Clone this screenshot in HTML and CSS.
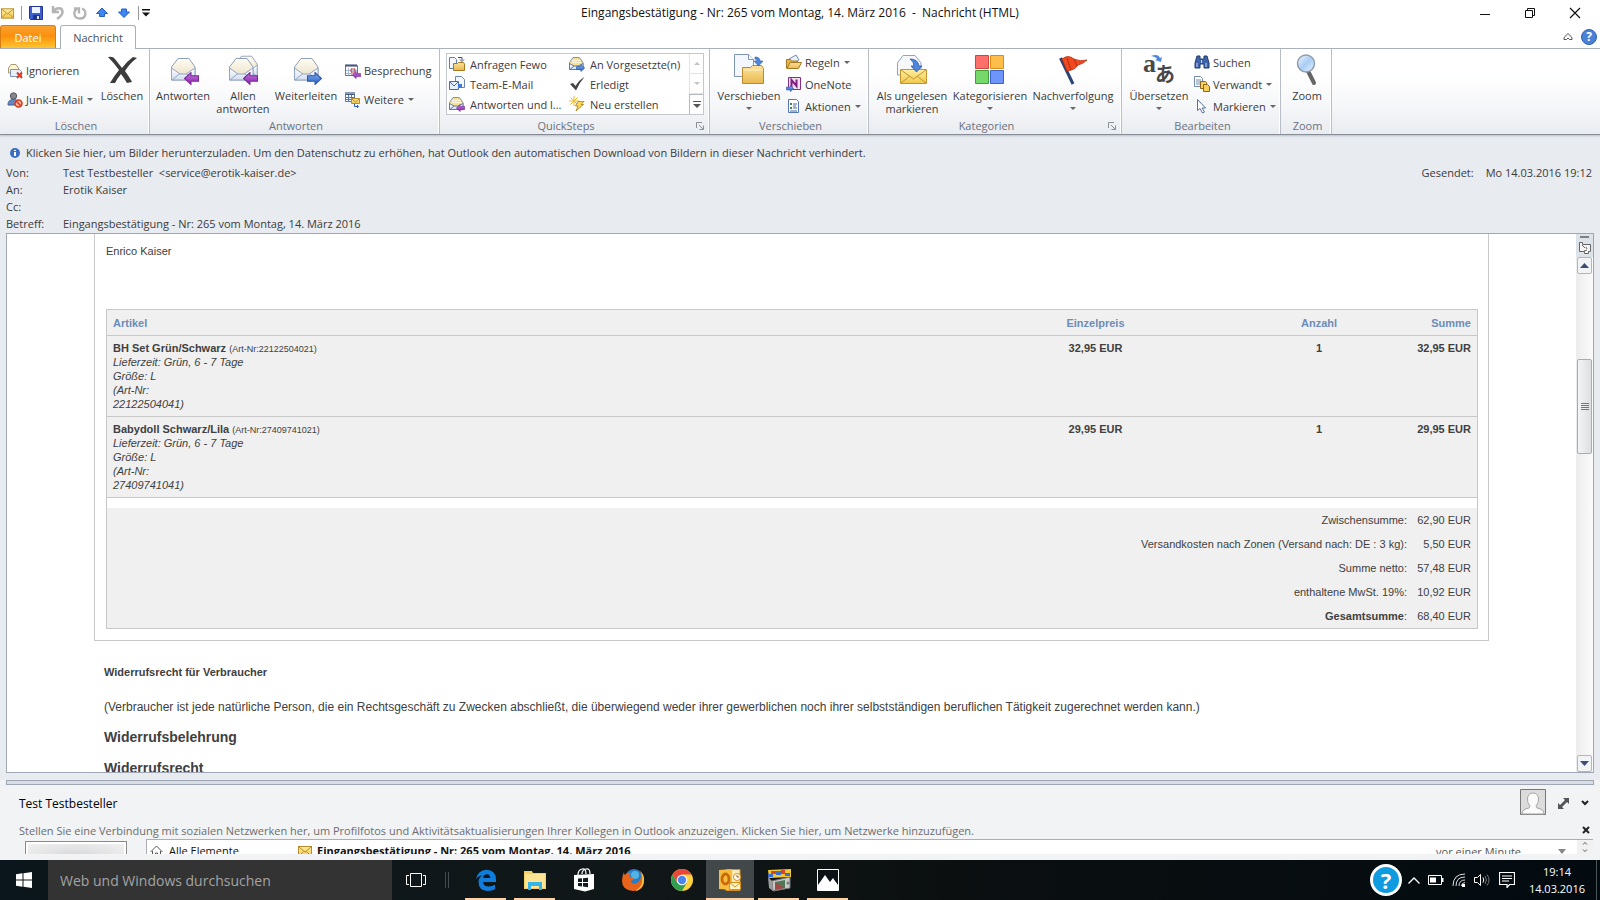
FILE: index.html
```html
<!DOCTYPE html>
<html lang="de">
<head>
    <meta charset="UTF-8">
    <title>Eingangsbestätigung - Nr: 265 vom Montag, 14. März 2016 - Nachricht (HTML)</title>
    <link rel="stylesheet" href="styles.css">
</head>
<body>
    <!-- shared icon shapes -->
    <svg class="defs" aria-hidden="true">
        <defs>
            <linearGradient id="gPaper" x1="0" y1="0" x2="0" y2="1"><stop offset="0" stop-color="#fffdf2"/><stop offset="1" stop-color="#e6dcc0"/></linearGradient>
            <linearGradient id="gEnv" x1="0" y1="0" x2="0" y2="1"><stop offset="0" stop-color="#ffffff"/><stop offset="1" stop-color="#d3def0"/></linearGradient>
            <linearGradient id="gYellow" x1="0" y1="0" x2="0" y2="1"><stop offset="0" stop-color="#fdeea0"/><stop offset="1" stop-color="#f2c84b"/></linearGradient>
            <linearGradient id="gFolder" x1="0" y1="0" x2="0" y2="1"><stop offset="0" stop-color="#fbe3a0"/><stop offset="1" stop-color="#e9b94f"/></linearGradient>
            <linearGradient id="gBlue" x1="0" y1="0" x2="0" y2="1"><stop offset="0" stop-color="#7fb0f2"/><stop offset="1" stop-color="#2a5fc4"/></linearGradient>
            <linearGradient id="gPurple" x1="0" y1="0" x2="0" y2="1"><stop offset="0" stop-color="#c47bdc"/><stop offset="1" stop-color="#8a1fae"/></linearGradient>
            <linearGradient id="gLens" x1="0" y1="0" x2="1" y2="1"><stop offset="0" stop-color="#f4f9ff"/><stop offset=".5" stop-color="#a9cdf4"/><stop offset="1" stop-color="#eaf4ff"/></linearGradient>
        </defs>
        <symbol id="envOpen" viewBox="0 0 32 32">
            <path d="M4.500 13 11 4.500h11l6 8.500v13h-23.500z" fill="url(#gPaper)" stroke="#8fa0b8"/>
            <path d="M4.500 14 13 20h6l9-6v12h-23.500z" fill="url(#gEnv)" stroke="#93a5c4"/>
            <path d="M5 26 13 19.500M28 26 19 19.500" stroke="#93a5c4" fill="none"/>
        </symbol>
        <symbol id="envSmall" viewBox="0 0 16 16">
            <path d="M.5 6.500 4 1.500h6.500l3.500 5v7H.5z" fill="#fbe08a" stroke="#7f95b8"/>
            <path d="M3 4.500h8.500M3 6.500h8.500" stroke="#fff8dc"/>
            <path d="M.5 7.500 5 10h4.500l4.500-2.500v6H.5z" fill="url(#gEnv)" stroke="#5f7cab"/>
            <path d="M1 13.500l4-3.500M13.500 13.500l-4-3.500" stroke="#5f7cab"/>
        </symbol>
        <symbol id="arrLeft" viewBox="0 0 14 12"><path d="M.5 6 6.500.5v3h7v5h-7v3z" fill="url(#gPurple)" stroke="#7a2a98"/></symbol>
        <symbol id="arrRight" viewBox="0 0 14 12"><path d="M13.500 6 7.500.5v3h-7v5h7v3z" fill="url(#gBlue)" stroke="#2d57a8"/></symbol>
        <symbol id="mail" viewBox="0 0 16 16">
            <rect x="1.500" y="3.500" width="13" height="10" fill="url(#gYellow)" stroke="#b98a2c"/>
            <path d="M2 4l6 5 6-5M2 13l4.500-4.500M14 13 9.500 8.500" fill="none" stroke="#b98a2c"/>
        </symbol>
        <symbol id="folderPage" viewBox="0 0 32 32">
            <path d="M1.500.5h14l5 5v17h-19z" fill="#f4f8fe" stroke="#7f95b8"/><path d="M15.500.5v5h5" fill="#fff" stroke="#7f95b8"/>
            <path d="M9.500 13.500h8l2-2h9l2 3v15h-21z" fill="url(#gFolder)" stroke="#bb8a2e"/><path d="M10 16h20" stroke="#fff1c4"/>
            <path d="M22 3q5 0 5 4h3l-4.500 5-4.500-5h3q0-2-2-2z" fill="#4f86dd" stroke="#2a57ab" stroke-width=".6"/>
        </symbol>
        <symbol id="folderSmall" viewBox="0 0 16 16">
            <path d="M.5 1.500h5l2 2v9h-7z" fill="#f4f8fe" stroke="#5f7cab"/>
            <path d="M4.500 7.500h4l1-1h5l1 1.500v6.500h-11z" fill="url(#gFolder)" stroke="#a6791f"/>
            <path d="M9 1.500h4V4M11 3.500l2 2 2-2" fill="none" stroke="#3a4c73"/>
        </symbol>
    </svg>

    <div class="window">
        <header class="titlebar">
            <div class="quick">
                <svg width="15" height="16" viewBox="0 0 16 16"><use href="#mail"/></svg>
                <span class="vline"></span>
                <button aria-label="Speichern"><svg width="16" height="16" viewBox="0 0 16 16"><path d="M1.500 1.500h13v13h-12l-1-1z" fill="#3d5fd0" stroke="#23318f"/><path d="M4 2h8v6H4z" fill="#eef4ff"/><path d="M5 10h7v4H5z" fill="#23318f"/><path d="M9 11h2v3H9z" fill="#dfe7fa"/></svg></button>
                <button aria-label="Rückgängig"><svg width="16" height="16" viewBox="0 0 16 16"><path d="M3 1v6h6M3.500 6.500C6 2 12.500 2 12.500 7c0 3-2.500 5-5.500 7" fill="none" stroke="#b4b4b4" stroke-width="2.500"/></svg></button>
                <button aria-label="Wiederholen"><svg width="16" height="16" viewBox="0 0 16 16"><path d="M10 3.500c5 2 4.500 10-2 10s-7-7-3.500-9M2 3.500h5v5" fill="none" stroke="#b4b4b4" stroke-width="2.300"/></svg></button>
                <button aria-label="Vorheriges Element"><svg width="16" height="16" viewBox="0 0 16 16"><path d="M8 3l5.500 5.500h-3v3h-5v-3h-3z" fill="#3f86ee" stroke="#2460c8"/></svg></button>
                <button aria-label="Nächstes Element"><svg width="16" height="16" viewBox="0 0 16 16"><path d="M8 12.500 2.500 7h3V4h5v3h3z" fill="#3f86ee" stroke="#2460c8"/></svg></button>
                <span class="vline"></span>
                <button class="more" aria-label="Anpassen"><svg width="8" height="8" viewBox="0 0 8 8"><path d="M0 0h8v1.500H0zM0 3.500h8l-4 4z" fill="#111"/></svg></button>
            </div>
            <h1>Eingangsbestätigung - Nr: 265 vom Montag, 14. März 2016&nbsp; -&nbsp; Nachricht (HTML)</h1>
            <div class="controls">
                <button aria-label="Minimieren"><svg width="12" height="12" viewBox="0 0 12 12"><path d="M1 7.500h10" stroke="#111"/></svg></button>
                <button aria-label="Verkleinern"><svg width="12" height="12" viewBox="0 0 12 12" fill="none" stroke="#111"><path d="M1.500 3.500h7v7h-7zM3.500 3V1.500h7v7H9"/></svg></button>
                <button aria-label="Schließen"><svg width="12" height="12" viewBox="0 0 12 12"><path d="M1 1l10 10M11 1 1 11" stroke="#111" stroke-width="1.200"/></svg></button>
            </div>
        </header>

        <nav class="tabs">
            <button class="tab file">Datei</button>
            <button class="tab active">Nachricht</button>
            <div class="tab-tools">
                <button aria-label="Menüband minimieren"><svg width="10" height="8" viewBox="0 0 10 8"><path d="M1 5q0-1 4-4.500Q9 4 9 5v1.500H6.500L5 5 3.500 6.500H1z" fill="#fff" stroke="#555"/></svg></button>
                <button class="help" aria-label="Hilfe">?</button>
            </div>
        </nav>

        <div class="ribbon">
            <section class="group g-delete">
                <div class="tools">
                    <div class="stack two">
                        <button class="small"><svg width="16" height="16" viewBox="0 0 16 16"><path d="M1.500 5 4 1.500h5L11.500 5v5h-10z" fill="#fff6d0" stroke="#a59a70"/><path d="M3.500 6.500h9l2 2v5h-11z" fill="#e8eefa" stroke="#8093ba"/><path d="M10 9.500l5 5.500M15 9.500 10 15" stroke="#e33a22" stroke-width="2"/></svg>Ignorieren</button>
                        <button class="small"><svg width="16" height="16" viewBox="0 0 16 16"><circle cx="6.500" cy="4" r="3.200" fill="#83868c" stroke="#54575e"/><path d="M1 13c0-4 2-5.500 5.500-5.500S11 9 11 13z" fill="#6287c4" stroke="#44608f"/><circle cx="11.500" cy="11.500" r="3.500" fill="#f9b9a8" stroke="#d83a1c" stroke-width="1.600"/><path d="M9 9l5 5" stroke="#d83a1c" stroke-width="1.600"/></svg>Junk-E-Mail<i class="caret"></i></button>
                    </div>
                    <button class="big w46"><svg width="32" height="32" viewBox="0 0 32 32"><path d="M2 3q5-1 7 2l7 9q4-6 11-11l4 1q-7 5-12 13 5 7 7 11l-5 1q-3-5-6-9-4 5-6 9H4q4-7 9-13Q8 9 2 3z" fill="#3c3c3c"/></svg><span>Löschen</span></button>
                </div>
                <h2>Löschen</h2>
            </section>

            <section class="group g-reply">
                <div class="tools">
                    <button class="big w60"><svg width="32" height="32" viewBox="0 0 32 32"><use href="#envOpen" width="32" height="32"/><use href="#arrLeft" x="17" y="18" width="15" height="13"/></svg><span>Antworten</span></button>
                    <button class="big w60"><svg width="32" height="32" viewBox="0 0 32 32"><use href="#envOpen" x="4" y="-3" width="30" height="32"/><use href="#envOpen" x="-2" width="32" height="32"/><use href="#arrLeft" x="16" y="18" width="15" height="13"/></svg><span>Allen<br>antworten</span></button>
                    <button class="big w66"><svg width="32" height="32" viewBox="0 0 32 32"><use href="#envOpen" width="32" height="32"/><use href="#arrRight" x="17" y="18" width="15" height="13"/></svg><span>Weiterleiten</span></button>
                    <div class="stack two">
                        <button class="small"><svg width="16" height="16" viewBox="0 0 16 16"><path d="M.5 2.500h12v10H.5z" fill="#fff" stroke="#5577b5"/><path d="M1 1v3M3 1v3M5 1v3M7 1v3M9 1v3M11 1v3" stroke="#2b3f6b"/><path d="M3.500 5v7M6.500 5v7M9.500 5v7M1 7.500h11M1 10.500h11" stroke="#a3b8de"/><path d="M6 6h4v3H6z" fill="none" stroke="#e0402a"/><use href="#arrLeft" x="7" y="8" width="9" height="8"/></svg>Besprechung</button>
                        <button class="small"><svg width="16" height="16" viewBox="0 0 16 16"><path d="M.5 2.500h9v7h-9z" fill="#fff" stroke="#5577b5"/><path d="M1 0v3M3 0v3M5 0v3M7 0v3M9 0v3" stroke="#2b3f6b"/><path d="M3.500 3v6M6.500 3v6M1 5.500h8M1 7.500h8" stroke="#5577b5"/><path d="M6.500 6.500h8v5h-8z" fill="url(#gYellow)" stroke="#b98a2c"/><path d="M7 7l3.500 3L14 7" fill="none" stroke="#b98a2c"/><path d="M9.500 12v2.500h4M12 13l1.500 1.500L12 16" fill="none" stroke="#2a5fc4"/></svg>Weitere<i class="caret"></i></button>
                    </div>
                </div>
                <h2>Antworten</h2>
            </section>

            <section class="group g-quick">
                <div class="tools">
                    <div class="gallery">
                        <div class="steps">
                            <button class="small"><svg width="16" height="16"><use href="#folderSmall"/></svg>Anfragen Fewo</button>
                            <button class="small"><svg width="16" height="16"><use href="#envSmall"/><use href="#arrRight" x="7" y="8" width="9" height="8"/></svg>An Vorgesetzte(n)</button>
                            <button class="small"><svg width="16" height="16" viewBox="0 0 16 16"><path d="M6.500.5h6l3 3v8h-9z" fill="#f4f8fe" stroke="#6d86b3"/><path d="M.5 5.500h9v8h-9z" fill="#e7effc" stroke="#4c6ba6"/><path d="M1 6l4 4 4-4" fill="none" stroke="#4c6ba6"/><path d="M9 8h4v4H9z" fill="#3d78d6"/></svg>Team-E-Mail</button>
                            <button class="small"><svg width="16" height="16" viewBox="0 0 16 16"><path d="M1 8l3-1 2.500 3Q10 4 15.500 1 10 7 7 14.500z" fill="#444"/></svg>Erledigt</button>
                            <button class="small"><svg width="16" height="16"><use href="#envSmall"/><use href="#arrLeft" x="7" y="8" width="9" height="8"/></svg>Antworten und l...</button>
                            <button class="small"><svg width="16" height="16" viewBox="0 0 16 16"><path d="M5 0v10M0 5h10M1.500 1.500l7 7M8.500 1.500l-7 7" stroke="#f0b92c"/><path d="M9 5.500h6l-3 3h2.500L7 15l2-5H6.500z" fill="#fbd75a" stroke="#a87c1c" stroke-width=".8"/></svg>Neu erstellen</button>
                        </div>
                        <div class="gallery-scroll">
                            <button aria-label="Nach oben"><i class="caret up faint"></i></button>
                            <button aria-label="Nach unten"><i class="caret faint"></i></button>
                            <button class="on" aria-label="Mehr"><svg width="8" height="8" viewBox="0 0 8 8"><path d="M0 0h8v1H0zM0 3h8L4 7z" fill="#555"/></svg></button>
                        </div>
                    </div>
                </div>
                <h2>QuickSteps</h2>
                <button class="launcher" aria-label="QuickSteps verwalten"><svg width="8" height="8" viewBox="0 0 8 8" fill="none" stroke="#8b9097"><path d="M.5 6V.5H6M3 3l4 4M7.500 3.500v4h-4"/></svg></button>
            </section>

            <section class="group g-move">
                <div class="tools">
                    <button class="big w72"><svg width="32" height="32"><use href="#folderPage"/></svg><span>Verschieben</span><i class="caret"></i></button>
                    <div class="stack">
                        <button class="small"><svg width="16" height="16" viewBox="0 0 16 16"><path d="M3 5l7-4 3 5-6 4z" fill="#eaf1fc" stroke="#6f88b5"/><path d="M.5 14.500v-9h4l1 1.500h6v2" fill="#e5b54c" stroke="#a6791f"/><path d="M1 14.500 4 8.500h11.500l-3 6z" fill="url(#gFolder)" stroke="#a6791f"/></svg>Regeln<i class="caret"></i></button>
                        <button class="small"><svg width="16" height="16" viewBox="0 0 16 16"><path d="M2.500 1.500h12v12h-12z" fill="#f1e1f3" stroke="#8a2b8c"/><path d="M5.500 11V4l5 6V3.500" fill="none" stroke="#80217f" stroke-width="2"/><use href="#arrRight" x="0" y="9" width="8" height="7"/></svg>OneNote</button>
                        <button class="small"><svg width="16" height="16" viewBox="0 0 16 16"><path d="M2.500 1.500h8l2 2v11h-10z" fill="#fff" stroke="#5577b5"/><path d="M4 5h2v2H4zM4 9h2v2H4z" fill="#3d8a4c"/><path d="M7 6h4M7 8h3M7 10h4M4 13h7" stroke="#4b6496"/></svg>Aktionen<i class="caret"></i></button>
                    </div>
                </div>
                <h2>Verschieben</h2>
            </section>

            <section class="group g-tags">
                <div class="tools">
                    <button class="big w80"><svg width="32" height="32" viewBox="0 0 32 32"><path d="M1.500 9 7 1.500h12l6 7.500v12h-23.500z" fill="#f7f8fa" stroke="#8fa5c4"/><path d="M4.500 15.500h26v14h-26z" fill="url(#gYellow)" stroke="#c39531"/><path d="M5 16l12.500 9L30 16M5 29l9-7M30 29l-9-7" fill="none" stroke="#c39531"/><path d="M14 5q8 0 9 7h3l-5.500 6-5.500-6h3q0-4-4-7z" fill="#4f86dd" stroke="#2a57ab" stroke-width=".8"/></svg><span>Als ungelesen<br>markieren</span></button>
                    <button class="big w76"><svg width="32" height="32" viewBox="0 0 32 32"><path d="M1.500 1.500h13v13h-13z" fill="#ff6f6a" stroke="#c94643"/><path d="M16.500 1.500h13v13h-13z" fill="#ffbe4a" stroke="#da8d12"/><path d="M1.500 16.500h13v13h-13z" fill="#76d86a" stroke="#3fa038"/><path d="M16.500 16.500h13v13h-13z" fill="#6e95fa" stroke="#3b62c6"/></svg><span>Kategorisieren</span><i class="caret"></i></button>
                    <button class="big w90"><svg width="32" height="32" viewBox="0 0 32 32"><path d="M3.500 4 16 30" stroke="#2b4478" stroke-width="3"/><path d="M5 5q6-5 12 0 6 3 13 1-4 4-9 5-3 5-11 6z" fill="#f0491f" stroke="#b92b0b" stroke-width=".8"/><path d="M17 5l3 7M10 4l4 12" stroke="#b92b0b"/></svg><span>Nachverfolgung</span><i class="caret"></i></button>
                </div>
                <h2>Kategorien</h2>
                <button class="launcher" aria-label="Nachrichtenoptionen"><svg width="8" height="8" viewBox="0 0 8 8" fill="none" stroke="#8b9097"><path d="M.5 6V.5H6M3 3l4 4M7.500 3.500v4h-4"/></svg></button>
            </section>

            <section class="group g-edit">
                <div class="tools">
                    <button class="big w68"><svg class="translate" width="32" height="32" viewBox="0 0 32 32"><text x="0" y="18" class="latin">a</text><text x="12" y="28" class="kana">あ</text><path d="M8 2q7-3 9 2l2-1-1 5-6-2 2-1q-1-2-6-3z" fill="#4f86dd"/></svg><span>Übersetzen</span><i class="caret"></i></button>
                    <div class="stack">
                        <button class="small"><svg width="16" height="16" viewBox="0 0 16 16"><path d="M3 2h3v3h4V2h3l2 7v5h-5v-4H6v4H1V9z" fill="#3f63a8" stroke="#1f3a70"/><path d="M3 9v4M12 9v4M7.500 6v3" stroke="#c4d8f8"/></svg>Suchen</button>
                        <button class="small"><svg width="16" height="16" viewBox="0 0 16 16"><path d="M.5.500h6l2 2v8h-8z" fill="#fff" stroke="#7289b2"/><path d="M2 4h5M2 6h5M2 8h5" stroke="#7289b2"/><path d="M6.500 5.500h5l1 1v6h-6z" fill="#f7cf5c" stroke="#8e6717"/><path d="M9.500 8.500h4l2 2v5h-6z" fill="#f7cf5c" stroke="#8e6717"/></svg>Verwandt<i class="caret"></i></button>
                        <button class="small"><svg width="16" height="16" viewBox="0 0 16 16"><path d="M3.500 1.500v11l2.500-2 2.500 4.500 2-1-2.500-4h3.500z" fill="#fff" stroke="#53709f"/></svg>Markieren<i class="caret"></i></button>
                    </div>
                </div>
                <h2>Bearbeiten</h2>
            </section>

            <section class="group g-zoom">
                <div class="tools">
                    <button class="big w46"><svg width="32" height="32" viewBox="0 0 32 32"><path d="M17 17l6 12" stroke="#666" stroke-width="4" stroke-linecap="round"/><circle cx="15" cy="9.500" r="8.500" fill="url(#gLens)" stroke="#8f9cab" stroke-width="1.500"/></svg><span>Zoom</span></button>
                </div>
                <h2>Zoom</h2>
            </section>
        </div>

        <main class="message">
            <p class="infobar"><svg width="10" height="10" viewBox="0 0 10 10"><circle cx="5" cy="5" r="5" fill="#3b6fc4"/><path d="M4 2h2v1H4zM4 4h2v4H4z" fill="#fff"/></svg>Klicken Sie hier, um Bilder herunterzuladen. Um den Datenschutz zu erhöhen, hat Outlook den automatischen Download von Bildern in dieser Nachricht verhindert.</p>
            <div class="meta">
                <dl>
                    <dt>Von:</dt><dd>Test Testbesteller &nbsp;&lt;service@erotik-kaiser.de&gt;</dd>
                    <dt>An:</dt><dd>Erotik Kaiser</dd>
                    <dt>Cc:</dt><dd></dd>
                    <dt>Betreff:</dt><dd>Eingangsbestätigung - Nr: 265 vom Montag, 14. März 2016</dd>
                </dl>
                <p class="sent"><span>Gesendet:</span><span>Mo 14.03.2016 19:12</span></p>
            </div>

            <div class="reader">
                <article class="mail">
                    <div class="order">
                        <p>Enrico Kaiser</p>
                        <div class="order-box">
                            <table class="items">
                                <thead>
                                    <tr><th>Artikel</th><th class="price">Einzelpreis</th><th class="count">Anzahl</th><th class="sum">Summe</th></tr>
                                </thead>
                                <tbody>
                                    <tr>
                                        <td><b>BH Set Grün/Schwarz</b> <small>(Art-Nr:22122504021)</small><br><em>Lieferzeit: Grün, 6 - 7 Tage<br>Größe: L<br>(Art-Nr:<br>22122504041)</em></td>
                                        <td class="price">32,95 EUR</td><td class="count">1</td><td class="sum">32,95 EUR</td>
                                    </tr>
                                    <tr>
                                        <td><b>Babydoll Schwarz/Lila</b> <small>(Art-Nr:27409741021)</small><br><em>Lieferzeit: Grün, 6 - 7 Tage<br>Größe: L<br>(Art-Nr:<br>27409741041)</em></td>
                                        <td class="price">29,95 EUR</td><td class="count">1</td><td class="sum">29,95 EUR</td>
                                    </tr>
                                </tbody>
                            </table>
                            <table class="totals">
                                <tr><td>Zwischensumme:</td><td>62,90 EUR</td></tr>
                                <tr><td>Versandkosten nach Zonen (Versand nach: DE : 3 kg):</td><td>5,50 EUR</td></tr>
                                <tr><td>Summe netto:</td><td>57,48 EUR</td></tr>
                                <tr><td>enthaltene MwSt. 19%:</td><td>10,92 EUR</td></tr>
                                <tr><td><b>Gesamtsumme</b>:</td><td>68,40 EUR</td></tr>
                            </table>
                        </div>
                    </div>
                    <div class="legal">
                        <h3>Widerrufsrecht für Verbraucher</h3>
                        <p>(Verbraucher ist jede natürliche Person, die ein Rechtsgeschäft zu Zwecken abschließt, die überwiegend weder ihrer gewerblichen noch ihrer selbstständigen beruflichen Tätigkeit zugerechnet werden kann.)</p>
                        <h2>Widerrufsbelehrung</h2>
                        <h2>Widerrufsrecht</h2>
                    </div>
                </article>
                <div class="scrollbar">
                    <div class="split">
                        <i></i>
                        <svg width="12" height="12" viewBox="0 0 12 12"><path d="M.5.500h3v2h8v7h-2v2h-4v-2h-5z" fill="#f4f4f4" stroke="#666"/><path d="M3 3l3 3M7 5l1 2M5 9l3-1" stroke="#666"/></svg>
                    </div>
                    <button aria-label="Nach oben"><svg width="9" height="5" viewBox="0 0 9 5"><path d="M0 5h9L4.500 0z" fill="#3b4d77"/></svg></button>
                    <div class="track">
                        <div class="thumb"><i></i></div>
                    </div>
                    <button aria-label="Nach unten"><svg width="9" height="5" viewBox="0 0 9 5"><path d="M0 0h9L4.500 5z" fill="#3b4d77"/></svg></button>
                </div>
            </div>
        </main>

        <footer class="people">
            <div class="splitter"></div>
            <div class="person">
                <h2>Test Testbesteller</h2>
                <svg class="avatar" width="26" height="26" viewBox="0 0 26 26"><path d="M.5.500h25v25H.5z" fill="#dcdcdc" stroke="#777"/><path d="M2 25q0-5 7-6l1-2Q7 14 7.500 9q1-5 5.500-5t5.500 5q.5 5-2.500 8l1 2q7 1 7 6z" fill="#fafafa" stroke="#a5a5a5"/></svg>
                <button aria-label="Vergrößern"><svg width="11" height="11" viewBox="0 0 11 11"><path d="M5 0h6v6L9 4 4 9l2 2H0V5l2 2 5-5z" fill="#555"/></svg></button>
                <button aria-label="Zuklappen"><svg width="8" height="6" viewBox="0 0 8 6"><path d="M1 1l3 3 3-3" fill="none" stroke="#222" stroke-width="2"/></svg></button>
            </div>
            <div class="hint">
                <p>Stellen Sie eine Verbindung mit sozialen Netzwerken her, um Profilfotos und Aktivitätsaktualisierungen Ihrer Kollegen in Outlook anzuzeigen. Klicken Sie hier, um Netzwerke hinzuzufügen.</p>
                <button aria-label="Schließen"><svg width="8" height="8" viewBox="0 0 8 8"><path d="M1 1l6 6M7 1 1 7" stroke="#222" stroke-width="2"/></svg></button>
            </div>
            <div class="feed">
                <div class="photo"></div>
                <div class="feed-list">
                    <span class="all"><svg width="13" height="13" viewBox="0 0 13 13"><path d="M.5 7 6.500 1l6 6M2.500 6v6h3V8h2v4h3V6" fill="#fff" stroke="#555"/></svg>Alle Elemente</span>
                    <b><svg width="16" height="16"><use href="#mail"/></svg>Eingangsbestätigung - Nr: 265 vom Montag, 14. März 2016</b>
                    <span class="when">vor einer Minute</span>
                    <i class="caret wide"></i>
                    <svg class="spin" width="16" height="15" viewBox="0 0 16 15"><path d="M6 4.500l2-2 2 2M6 9.500l2 2 2-2" fill="none" stroke="#555"/></svg>
                </div>
            </div>
        </footer>
    </div>

    <div class="taskbar">
        <button class="start" aria-label="Start"><svg width="16" height="16" viewBox="0 0 16 16" fill="#fff"><path d="M0 2.200 6.500 1.300v6.200H0zM7.500 1.200 16 0v7.500H7.500zM0 8.500h6.500v6.200L0 13.800zM7.500 8.500H16V16l-8.500-1.200z"/></svg></button>
        <input type="text" placeholder="Web und Windows durchsuchen" aria-label="Suche">
        <button class="app view" aria-label="Taskansicht"><svg width="20" height="14" viewBox="0 0 20 14" fill="none" stroke="#fff"><path d="M4.500.5h11v13h-11zM3 2.500H.5v9H3M17 2.500h2.500v9H17"/></svg></button>
        <span class="grip"></span>
        <button class="app open" aria-label="Edge"><svg width="22" height="22" viewBox="0 0 22 22"><path d="M1 10Q3 1 11.500.8 21 1 21 11v2H8q.5 4.500 6 4.500 3 0 6-1.700v4.500Q17 22 12.500 22 3.500 21.500 3.500 13q0-4 4-7Q3 7 1 10zM8.200 9h7q0-3.700-3.400-3.700T8.200 9z" fill="#0f7ddb"/></svg></button>
        <button class="app open" aria-label="Explorer"><svg width="22" height="20" viewBox="0 0 22 20"><path d="M0 1h8l1 2h13v16H0z" fill="#f6cf62"/><path d="M1 4h20v14H1z" fill="#fde492"/><path d="M4 20v-8h14v8h-3v-4H7v4z" fill="#35b4ea"/></svg></button>
        <button class="app" aria-label="Store"><svg width="22" height="24" viewBox="0 0 22 24"><path d="M1 7l20-1v15l-9 2.500L1 21z" fill="#fff"/><path d="M5 7q0-5 4-6t4 5M9 6q0-4 4-5t4 5" fill="none" stroke="#fff" stroke-width="1.200"/><path d="M5 10.500l4-.3V14H5zM10 10.200l5-.4V14h-5zM5 15h4v3.500l-4-.4zM10 15h5v4.200l-5-.6z" fill="#111a1e"/></svg></button>
        <button class="app" aria-label="Firefox"><svg width="24" height="24" viewBox="0 0 24 24"><circle cx="13" cy="10" r="9" fill="#2a7cc6"/><circle cx="14" cy="7" r="4" fill="#51b4e6"/><path d="M3 4q0 3 1 3 2-3 6-2-2 2-1 4 1 1 4 1-1 3-4 3 3 4 7 2 4-2 4-7 1-2-2-6 5 4 5 10 0 11-11 11Q1 22 1 13 1 8 3 4z" fill="#e8641b"/><path d="M20 4q3 3 3 8 0 9-9 11 6-3 7-9 1-5-1-10z" fill="#fbc43c"/></svg></button>
        <button class="app" aria-label="Chrome"><svg width="22" height="22" viewBox="0 0 22 22"><circle cx="11" cy="11" r="11" fill="#ffd23e"/><path d="M1.500 5.500A11 11 0 0 1 20.500 5.500H11L6.200 13.700z" fill="#e8473a"/><path d="M1.500 5.500A11 11 0 0 0 11 22l4.800-8.200-9.600 0z" fill="#2f9e4f"/><circle cx="11" cy="11" r="5.300" fill="#fff"/><circle cx="11" cy="11" r="4.200" fill="#4a86ec"/></svg></button>
        <button class="app open current" aria-label="Outlook"><svg width="22" height="22" viewBox="0 0 22 22"><path d="M7 .500h14v21H7z" fill="#fbe9b4" stroke="#d98e1c"/><path d="M0 1 13 0v21L0 20z" fill="#f7bb3e"/><ellipse cx="6.500" cy="10" rx="3.500" ry="5" fill="none" stroke="#c8690c" stroke-width="2.800"/><path d="M10.500 13.500h11v7h-11z" fill="#fff3c9" stroke="#d98e1c"/><path d="M11 14l5 4 5-4" fill="none" stroke="#d98e1c"/><circle cx="18" cy="8" r="3.500" fill="#fff" stroke="#d98e1c"/><path d="M18 6v2h2" fill="none" stroke="#a55a0a"/></svg></button>
        <button class="app open" aria-label="Bilder"><svg width="24" height="24" viewBox="0 0 24 24"><path d="M1 2l23-1v8L2 10z" fill="#f2c834"/><path d="M4 3h5v3H4zM14 2h4v4h-4z" fill="#d8432c"/><path d="M9 3h5v4H9zM18 5h5v3h-5zM1 6h5v3H1z" fill="#3c6fc9"/><path d="M5 13 23 9v11L6 23z" fill="#c9c9c9" stroke="#777"/><path d="M1 9l4 4 1 10-4-3z" fill="#9c9c9c"/><path d="M8 14l10-2v8L8 22z" fill="#4c7a58"/><path d="M8 14l10 6L8 22z" fill="#a04a46"/><circle cx="21" cy="15" r="1.500" fill="#777"/></svg></button>
        <button class="app open" aria-label="Fotos"><svg width="22" height="22" viewBox="0 0 22 22"><path d="M.5.500h21v21H.5z" fill="#0b1114" stroke="#fff"/><path d="M1 16l7-10 5 7 3-4 5 7v5H1z" fill="#fff"/></svg></button>
        <div class="tray">
            <button class="round" aria-label="Hilfe">?</button>
            <svg width="12" height="7" viewBox="0 0 12 7"><path d="M.5 6.500 6 1l5.500 5.500" fill="none" stroke="#fff" stroke-width="1.300"/></svg>
            <svg width="16" height="10" viewBox="0 0 16 10"><path d="M.5.500h13v9H.5z" fill="none" stroke="#fff"/><path d="M2 2.500h6v5H2zM14 3h1.500v4H14z" fill="#fff"/></svg>
            <svg width="14" height="14" viewBox="0 0 14 14" fill="none" stroke="#ddd"><path d="M1 13Q1 1 13 1M4 13q0-9 9-9M7 13q0-6 6-6M9.500 13q0-3 3.500-3.500"/><path d="M10 11h3v3h-3z" fill="#fff" stroke="none"/></svg>
            <svg width="17" height="14" viewBox="0 0 17 14" fill="none" stroke="#fff"><path d="M.5 4.500h3l3-3v11l-3-3h-3zM9 4.500q1.500 2.500 0 5"/><path d="M11 3q3 4 0 8M13 1.500q4 5.500 0 11" stroke="#777"/></svg>
            <svg width="16" height="16" viewBox="0 0 16 16" fill="none" stroke="#fff"><path d="M.5.500h15v12h-5l-2.500 3v-3H.5zM3 4h10M3 6.500h10M3 9h7" stroke-width="1.200"/></svg>
            <div class="clock">19:14<br>14.03.2016</div>
        </div>
    </div>
</body>
</html>
```
FILE: styles.css
```css
* {
    box-sizing: border-box;
}
html, body {
    height: 100%;
}
body {
    margin: 0;
    display: flex;
    flex-direction: column;
    overflow: hidden;
    font-family: "Open Sans", "Noto Sans", sans-serif;
    font-size: 11px;
    color: #3b3b3b;
    background: #e8ebf0;
}
h1, h2, h3, p, dl, dd {
    margin: 0;
    font-weight: normal;
}
button {
    font: inherit;
    color: inherit;
    background: none;
    border: 0;
    padding: 0;
    white-space: nowrap;
}
svg {
    flex: none;
    display: block;
}
.defs {
    position: absolute;
    width: 0;
    height: 0;
}
.caret {
    flex: none;
    border: 3px solid transparent;
    border-top-color: #666;
    border-bottom: 0;
}
.caret.up {
    border-top: 0;
    border-bottom: 3px solid #666;
}
.caret.faint {
    opacity: .4;
}
.caret.wide {
    border-width: 5px 4px 0;
    border-top-color: #888;
}
.window {
    flex: 1;
    min-height: 0;
    display: flex;
    flex-direction: column;
}

/* title bar and tabs */
.titlebar {
    display: grid;
    grid-template-columns: 1fr auto 1fr;
    align-items: center;
    height: 25px;
    background: #fff;
}
.quick {
    display: flex;
    align-items: center;
    gap: 6px;
}
.vline {
    width: 1px;
    height: 14px;
    background: #999;
}
.quick .more {
    margin-left: -3px;
}
.titlebar h1 {
    font-size: 12px;
    color: #111;
}
.controls {
    display: flex;
    justify-content: flex-end;
    gap: 33px;
    padding-right: 19px;
}
.tabs {
    display: flex;
    align-items: stretch;
    gap: 4px;
    height: 24px;
    background: #fff;
    border-bottom: 1px solid #a9b0b8;
}
.tab {
    width: 76px;
    color: #4a4f57;
    border-radius: 3px 3px 0 0;
}
.tab.file {
    width: 56px;
    color: #fff;
    border: 1px solid #d97d10;
    border-bottom: 0;
    background: linear-gradient(#f8a230, #fb8f0c 45%, #fdc52e);
}
.tab.active {
    height: 24px;
    background: #fff;
    border: 1px solid #a9b0b8;
    border-bottom: 0;
}
.tab-tools {
    margin-left: auto;
    display: flex;
    align-items: center;
    gap: 8px;
    padding-right: 3px;
}
.help {
    width: 16px;
    height: 16px;
    line-height: 14px;
    border-radius: 50%;
    border: 1px solid #2d5fb8;
    background: #4c82d6;
    color: #fff;
    font-weight: bold;
    font-size: 12px;
}

/* ribbon */
.ribbon {
    display: flex;
    height: 86px;
    background: linear-gradient(#fff 30%, #f6f7f9 65%, #e9ecf0);
    border-bottom: 1px solid #868d96;
    box-shadow: 0 1px 2px #b9bec6;
}
.group {
    position: relative;
    display: flex;
    flex-direction: column;
    padding-left: 3px;
    border-right: 1px solid #b9bec6;
    box-shadow: inset -1px 0 #fff;
}
.g-delete { width: 150px; }
.g-reply { width: 290px; }
.g-quick { width: 270px; }
.g-move { width: 159px; }
.g-tags { width: 253px; }
.g-edit { width: 159px; }
.g-zoom { width: 51px; }
.group h2 {
    font-size: 11px;
    line-height: 17px;
    text-align: center;
    color: #6a7180;
}
.g-quick h2, .g-tags h2 {
    padding-right: 20px;
}
.tools {
    display: flex;
    height: 68px;
    padding-top: 2px;
}
.g-delete .tools {
    padding-right: 4px;
}
.stack {
    display: flex;
    flex-direction: column;
    padding-left: 1px;
}
.stack.two {
    padding: 5px 0 0 4px;
}
.g-delete .stack {
    flex: 1;
}
.g-reply .stack {
    padding-left: 6px;
}
.small {
    display: flex;
    align-items: center;
    gap: 3px;
    height: 22px;
}
.two .small {
    height: 29px;
}
.small .caret {
    margin-left: 1px;
}
.big {
    display: flex;
    flex-direction: column;
    align-items: center;
    padding-top: 3px;
    line-height: 13px;
}
.big span {
    margin-top: 3px;
}
.big .caret {
    margin-top: 5px;
}
.w46 { width: 46px; }
.w60 { width: 60px; }
.w66 { width: 66px; }
.w68 { width: 68px; }
.w72 { width: 72px; }
.w76 { width: 76px; }
.w80 { width: 80px; }
.w90 { width: 90px; }
.translate {
    overflow: visible;
}
.translate text {
    fill: #484848;
}
.latin {
    font: bold 26px "Liberation Serif", serif;
}
.kana {
    font: bold 20px "Noto Sans CJK JP", sans-serif;
}
.gallery {
    display: flex;
    height: 62px;
    width: 258px;
    margin: 2px 0 0 3px;
    background: #fff;
    border: 1px solid #c3c8ce;
}
.steps {
    flex: 1;
    display: grid;
    grid-template-columns: 120px 1fr;
    align-content: start;
    padding-left: 2px;
}
.steps .small {
    height: 20px;
    gap: 5px;
}
.gallery-scroll {
    display: flex;
    flex-direction: column;
    width: 14px;
}
.gallery-scroll button {
    flex: 1;
    display: flex;
    align-items: center;
    justify-content: center;
    border-left: 1px solid #e0e3e7;
    border-bottom: 1px solid #e0e3e7;
}
.gallery-scroll .on {
    border: 1px solid #b5bac1;
    border-width: 1px 0 0 1px;
}
.launcher {
    position: absolute;
    right: 5px;
    bottom: 4px;
}

/* message header */
.message {
    flex: 1;
    min-height: 0;
    display: flex;
    flex-direction: column;
    padding: 7px 6px;
}
.infobar {
    display: flex;
    align-items: center;
    gap: 6px;
    line-height: 22px;
    padding-left: 4px;
}
.meta {
    display: flex;
    justify-content: space-between;
    padding-bottom: 1px;
}
.meta dl {
    display: grid;
    grid-template-columns: 57px auto;
    grid-auto-rows: 17px;
    line-height: 17px;
}
.sent {
    display: flex;
    gap: 12px;
    line-height: 17px;
    padding-right: 2px;
}

/* reading pane */
.reader {
    flex: 1;
    min-height: 0;
    display: flex;
    border: 1px solid #a0a7b4;
    background: #fff;
}
.mail {
    flex: 1;
    overflow: hidden;
    padding: 0 87px;
    font-family: "Liberation Sans", Arial, sans-serif;
    font-size: 11px;
    line-height: 14px;
    color: #404040;
}
.order {
    border: 1px solid #c8c8c8;
    border-top: 0;
    padding: 10px 10px 11px 11px;
}
.order-box {
    margin-top: 51px;
    border: 1px solid #c8c8c8;
}
table {
    width: 100%;
    border-spacing: 0;
    background: #f0f0f0;
}
.items th, .items td {
    padding: 5px 6px;
    vertical-align: top;
    text-align: left;
    border-bottom: 1px solid #c8c8c8;
}
.items th {
    padding: 6px 6px 5px;
    color: #6d8cb9;
}
.items .price {
    width: 265px;
    text-align: center;
    font-weight: bold;
}
.items .count {
    width: 182px;
    text-align: center;
    font-weight: bold;
}
.items .sum {
    width: 67px;
    padding-left: 0;
    text-align: right;
    font-weight: bold;
}
.items small {
    font-size: 9px;
    line-height: 9px;
}
.totals {
    margin-top: 10px;
}
.totals td {
    padding: 5px 6px 5px 0;
    text-align: right;
}
.totals td:last-child {
    width: 64px;
}
.legal {
    padding: 24px 10px;
}
.legal h3 {
    font-size: 11px;
    font-weight: bold;
}
.legal p {
    font-size: 12px;
    margin: 21px 0 14px;
    white-space: nowrap;
}
.legal h2 {
    font-size: 14px;
    font-weight: bold;
    line-height: 18px;
    margin-bottom: 13px;
}
.scrollbar {
    display: flex;
    flex-direction: column;
    width: 17px;
    background: linear-gradient(90deg, #ececec, #fbfbfb);
}
.split {
    display: flex;
    flex-direction: column;
    align-items: center;
    gap: 4px;
    height: 23px;
    padding-top: 2px;
    background: #dde2e9;
}
.split i {
    width: 9px;
    height: 2px;
    background: #7a8089;
}
.scrollbar button {
    display: flex;
    align-items: center;
    justify-content: center;
    height: 17px;
    margin: 0 1px;
    border: 1px solid #b1b7bf;
    border-radius: 2px;
    background: #f1f3f5;
}
.track {
    flex: 1;
    display: flex;
    flex-direction: column;
}
.track::before {
    content: "";
    flex: 85;
}
.track::after {
    content: "";
    flex: 302;
}
.thumb {
    flex: 94;
    display: flex;
    align-items: center;
    justify-content: center;
    margin: 0 1px;
    border: 1px solid #a6acb3;
    border-radius: 2px;
    background: linear-gradient(90deg, #f3f4f5, #dddfe2);
}
.thumb i {
    width: 8px;
    height: 7px;
    background: repeating-linear-gradient(#777 0 1px, transparent 1px 2px);
}

/* people pane */
.people {
    height: 80px;
    display: flex;
    flex-direction: column;
    overflow: hidden;
    background: #f1f3f5;
    border-bottom: 6px solid #f1f3f5;
}
.splitter {
    flex: none;
    height: 5px;
    margin: 0 6px;
    border: 1px solid #a0a7b4;
    background: #d9dee5;
}
.person {
    flex: none;
    display: flex;
    align-items: center;
    height: 36px;
    padding: 0 11px 0 19px;
}
.person h2 {
    flex: 1;
    font-size: 12px;
    color: #000;
}
.person button {
    margin-left: 12px;
}
.person h2 + .avatar {
    margin-top: -2px;
}
.hint {
    flex: none;
    display: flex;
    align-items: center;
    justify-content: space-between;
    height: 18px;
    padding: 0 10px 0 19px;
    color: #6d6d6d;
}
.feed {
    flex: none;
    display: flex;
    height: 30px;
    padding: 0 7px 0 25px;
}
.photo {
    width: 102px;
    margin: 2px 19px 0 0;
    border: 1px solid #8a8a8a;
    background: radial-gradient(#d9d9d9, #f3f3f3);
    box-shadow: inset 0 0 0 2px #fff;
}
.feed-list {
    flex: 1;
    display: flex;
    align-items: flex-start;
    line-height: 22px;
    color: #111;
    background: #fff;
    border: 1px solid #a9aeb5;
    border-right: 0;
}
.feed-list span, .feed-list b {
    display: flex;
    align-items: center;
    gap: 4px;
}
.feed-list .all {
    width: 150px;
    padding-left: 3px;
    gap: 6px;
}
.feed-list .when {
    margin-left: auto;
    line-height: 24px;
    color: #555;
}
.feed-list .caret {
    margin: 9px 11px 0 37px;
}
.spin {
    background: #f1f1f1;
}

/* taskbar */
.taskbar {
    display: flex;
    align-items: stretch;
    height: 40px;
    background: linear-gradient(90deg, #0a161b, #111718 40%, #0b0f10 60%, #030b10);
    color: #fff;
}
.start {
    width: 48px;
    display: flex;
    align-items: center;
    justify-content: center;
}
.taskbar input {
    width: 344px;
    border: 0;
    padding: 0 12px;
    background: #333;
    font: 14px "Open Sans", sans-serif;
    color: #fff;
}
.taskbar input::placeholder {
    color: #a3a3a3;
    opacity: 1;
}
.app {
    display: flex;
    align-items: center;
    justify-content: center;
    width: 41px;
    margin: 0 4px;
    border-bottom: 2px solid transparent;
    border-top: 2px solid transparent;
}
.app.view {
    margin: 0 12px 0 3px;
}
.app.open {
    border-bottom-color: #fbd3a6;
}
.app.current {
    width: 48px;
    margin: 0;
    background: #42484a;
    border-top-color: #42484a;
}
.grip {
    width: 4px;
    height: 16px;
    align-self: center;
    margin: 0 12px 0 -3px;
    border: 1px solid #454c4f;
    border-width: 0 1px;
}
.tray {
    margin-left: auto;
    display: flex;
    align-items: center;
    gap: 8px;
    margin-right: 3px;
    padding-right: 11px;
    border-right: 1px solid #4b5558;
}
.round {
    width: 32px;
    height: 32px;
    margin-right: -2px;
    border: 3px solid #fff;
    border-radius: 50%;
    background: #0f9be0;
    font-size: 22px;
    line-height: 24px;
    font-weight: bold;
}
.clock {
    font-size: 11px;
    line-height: 17px;
    text-align: center;
    margin-left: 6px;
}
```
